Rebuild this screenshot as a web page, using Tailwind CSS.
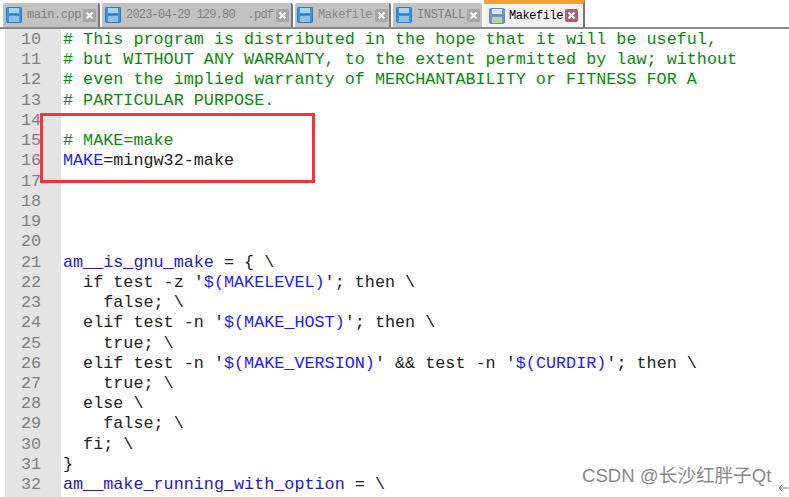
<!DOCTYPE html>
<html><head><meta charset="utf-8"><script src="https://cdn.jsdelivr.net/npm/@tailwindcss/browser@4"></script></head>
<body class="bg-white">
<div class="relative w-[789px] h-[497px] overflow-hidden bg-white font-['Liberation_Mono',monospace]">
  <svg width="0" height="0" class="absolute"><defs>
    <g id="s"><rect x="0.5" y="0.5" width="15" height="15" rx="1" fill="#3d94dc" stroke="#2f7cc4"/><rect x="3" y="1" width="10" height="5" fill="#a9d0ee"/><rect x="3" y="9" width="10" height="6" fill="#8fc1e6"/><rect x="3" y="7" width="10" height="1" fill="#2f7cc4"/></g>
    <g id="a"><rect x="0.5" y="0.5" width="15" height="15" rx="1" fill="#6f8fd8" stroke="#6a86c8"/><rect x="3" y="1" width="10" height="5" fill="#dfe6f6"/><rect x="3" y="9" width="10" height="6" fill="#b4d79e"/><rect x="3" y="7" width="10" height="1" fill="#6a86c8"/></g>
    <g id="x"><rect width="13" height="13" rx="2" fill="currentColor"/><path d="M3.5 3.5l6 6M9.5 3.5l-6 6" stroke="#fff" stroke-width="2.2"/></g>
  </defs></svg>
  <div class="flex h-[29px] border-b-2 border-[#8a8a8a] pl-[3px] gap-[2px] text-[12px] leading-none">
    <div class="w-[97px] mt-[3px] h-[24px] bg-[#c2c2c2] rounded-t-[2px] border-r-2 border-[#777] flex items-center pl-[3px] text-[#808080]"><svg width="16" height="16"><use href="#s"/></svg><span class="ml-[5px] tracking-[-0.45px] w-[56px]">main.cpp</span><svg width="13" height="13" class="text-[#a6a6a6]"><use href="#x"/></svg></div>
    <div class="w-[191px] mt-[3px] h-[24px] bg-[#c2c2c2] rounded-t-[2px] border-r-2 border-[#777] flex items-center pl-[3px] text-[#808080]"><svg width="16" height="16"><use href="#s"/></svg><span class="ml-[5px] tracking-[-0.8px] w-[150px] whitespace-pre">2023-04-29 129.80  .pdf</span><svg width="13" height="13" class="text-[#a6a6a6]"><use href="#x"/></svg></div>
    <div class="w-[96px] mt-[3px] h-[24px] bg-[#c2c2c2] rounded-t-[2px] border-r-2 border-[#777] flex items-center pl-[2px] text-[#888]"><svg width="16" height="16"><use href="#s"/></svg><span class="ml-[5px] tracking-[-0.45px] w-[57px]">Makefile</span><svg width="13" height="13" class="text-[#a6a6a6]"><use href="#x"/></svg></div>
    <div class="w-[89px] mt-[3px] h-[24px] bg-[#c2c2c2] rounded-t-[2px] flex items-center pl-[3px] text-[#808080]"><svg width="16" height="16"><use href="#s"/></svg><span class="ml-[5px] tracking-[-0.35px] w-[50px]">INSTALL</span><svg width="13" height="13" class="text-[#a6a6a6]"><use href="#x"/></svg></div>
    <div class="w-[101px] h-[27px] bg-[#f2f2f2] border-t-[4px] border-[#f5a033] border-r-2 border-r-[#777] flex items-center pl-[5px] text-black"><svg width="16" height="16"><use href="#a"/></svg><span class="ml-[4px] tracking-[-0.45px] w-[56px]">Makefile</span><svg width="13" height="13" class="text-[#a8607c]"><use href="#x"/></svg></div>
  </div>
  <div class="flex pl-[5px]">
    <div class="w-[56px] bg-[#e4e4e4] pt-[1px] text-[#808080] text-[16.78px] leading-[20.23px] text-right pr-[20px] h-[468px]">
      <div>10</div><div>11</div><div>12</div><div>13</div><div>14</div><div>15</div><div>16</div><div>17</div><div>18</div><div>19</div><div>20</div><div>21</div><div>22</div><div>23</div><div>24</div><div>25</div><div>26</div><div>27</div><div>28</div><div>29</div><div>30</div><div>31</div><div>32</div>
    </div>
    <pre class="pl-[2px] pt-[1px] font-['Liberation_Mono',monospace] text-[16.78px] leading-[20.23px] text-[#222]"><span class="text-[#0a8a0a]"># This program is distributed in the hope that it will be useful,
# but WITHOUT ANY WARRANTY, to the extent permitted by law; without
# even the implied warranty of MERCHANTABILITY or FITNESS FOR A
# PARTICULAR PURPOSE.

# MAKE=make</span>
<span class="text-[#2020ff]">MAKE</span>=mingw32-make




<span class="text-[#2020c0]">am__is_gnu_make</span> = { \
  if test -z '<span class="text-[#2020ff]">$(MAKELEVEL)</span>'; then \
    false; \
  elif test -n '<span class="text-[#2020ff]">$(MAKE_HOST)</span>'; then \
    true; \
  elif test -n '<span class="text-[#2020ff]">$(MAKE_VERSION)</span>' &amp;&amp; test -n '<span class="text-[#2020ff]">$(CURDIR)</span>'; then \
    true; \
  else \
    false; \
  fi; \
}
<span class="text-[#2020c0]">am__make_running_with_option</span> = \</pre>
  </div>
  <div class="absolute left-[40px] top-[113px] w-[275px] h-[70px] border-[3px] border-[#f5333a]"></div>
  <div class="absolute left-[582px] top-[466px] text-[18.6px] leading-[20px] text-[#8a8a8a] font-['Liberation_Sans','Noto_Sans_CJK_SC',sans-serif] whitespace-nowrap">CSDN @长沙红胖子Qt</div>
  <svg class="absolute left-[778px] top-[484px]" width="10" height="8" fill="none" stroke="#777"><path d="M10 4H1M4 1L1 4l3 3"/></svg>
</div>
</body></html>
